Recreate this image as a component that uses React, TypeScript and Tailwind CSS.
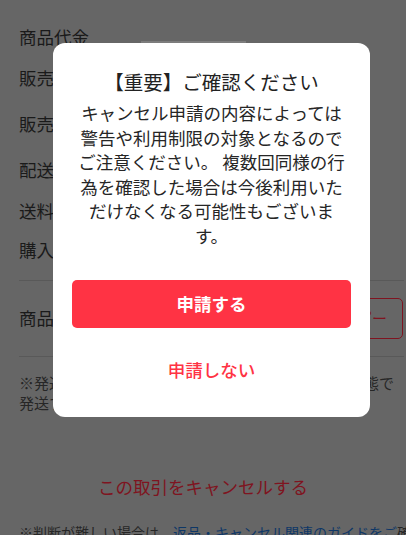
import React from 'react';

// Rows of the order page that sits behind the dialog (shown dimmed)
const ROWS = [
  { label: '商品代金', h: 'h-[40px]' },
  { label: '販売手数料', h: 'h-[42px]' },
  { label: '販売利益', h: 'h-[50px]' },
  { label: '配送方法', h: 'h-[42px]' },
  { label: '送料', h: 'h-[40px]' },
  { label: '購入日時', h: 'h-[38px]' },
];

const ConfirmDialog = ({ onSubmit, onCancel }: { onSubmit: () => void; onCancel: () => void }) => {
  return (
    <div className="w-[317px] h-[374px] ml-[53px] rounded-[12px] bg-white flex flex-col pt-[25px] pb-[23px]">
      <h2 className="text-center text-[19.5px] leading-[28px] font-normal text-[#222]">【重要】ご確認ください</h2>
      <p className="mt-[5px] px-[22px] text-center text-[17.5px] leading-[24.5px] text-[#262626]">
        キャンセル申請の内容によっては警告や利用制限の対象となるのでご注意ください。 複数回同様の行為を確認した場合は今後利用いただけなくなる可能性もございます。
      </p>
      <div className="mt-[32px] px-[19px] flex flex-col">
        <button
          onClick={onSubmit}
          className="h-[48px] w-full rounded-[5px] bg-[#ff3344] text-white text-[17.5px] font-bold"
        >
          申請する
        </button>
        <button
          onClick={onCancel}
          className="mt-[18px] h-[48px] w-full text-[#ff3344] text-[17.5px] font-medium"
        >
          申請しない
        </button>
      </div>
    </div>
  );
};

export default function App() {
  return (
    <div className="relative w-full h-[535px] overflow-hidden bg-[#666666] font-['Noto_Sans_CJK_JP','Noto_Sans',sans-serif]">
      {/* Page behind */}
      <div className="pt-[17px]">
        <div className="px-[19px]">
          {ROWS.map((r) => (
            <div key={r.label} className={`${r.h} flex items-center text-[17.5px] text-[#1a1a1a]`}>
              {r.label}
            </div>
          ))}
        </div>
        <div className="mt-[11px] ml-[19px] mr-[2px] h-px bg-[#595959]" />
        <div className="h-[75px] pl-[19px] pr-[3px] flex items-center justify-between">
          <span className="text-[17.5px] text-[#1a1a1a]">商品ID</span>
          <span className="h-[41px] w-[77px] rounded-[5px] border border-[#7f1420] text-[#7f1420] text-[15px] flex items-center justify-center">
            コピー
          </span>
        </div>
        <div className="ml-[19px] mr-[2px] h-px bg-[#595959]" />
        <p className="mt-[16px] px-[19px] text-[15px] leading-[20px] text-[#262626] whitespace-nowrap">
          ※発送済みの場合は、お届けした商品を未開封の状態で
          <br />
          発送する必要があります。
        </p>
        <div className="mt-[62px] text-center text-[17.5px] leading-[24px] text-[#7f1420]">
          この取引をキャンセルする
        </div>
        <p className="mt-[23px] px-[19px] text-[14px] leading-[20px] text-[#262626] whitespace-nowrap">
          ※判断が難しい場合は、<span className="text-[#0e3766]">返品・キャンセル関連のガイドをご</span>確認ください。
        </p>
      </div>

      {/* Overlay with dialog */}
      <div className="absolute inset-0 flex flex-col pt-[41px]">
        <div className="ml-[141px] w-[105px] h-[2px] bg-[#7c7c7c]" />
        <ConfirmDialog onSubmit={() => {}} onCancel={() => {}} />
      </div>
    </div>
  );
}
